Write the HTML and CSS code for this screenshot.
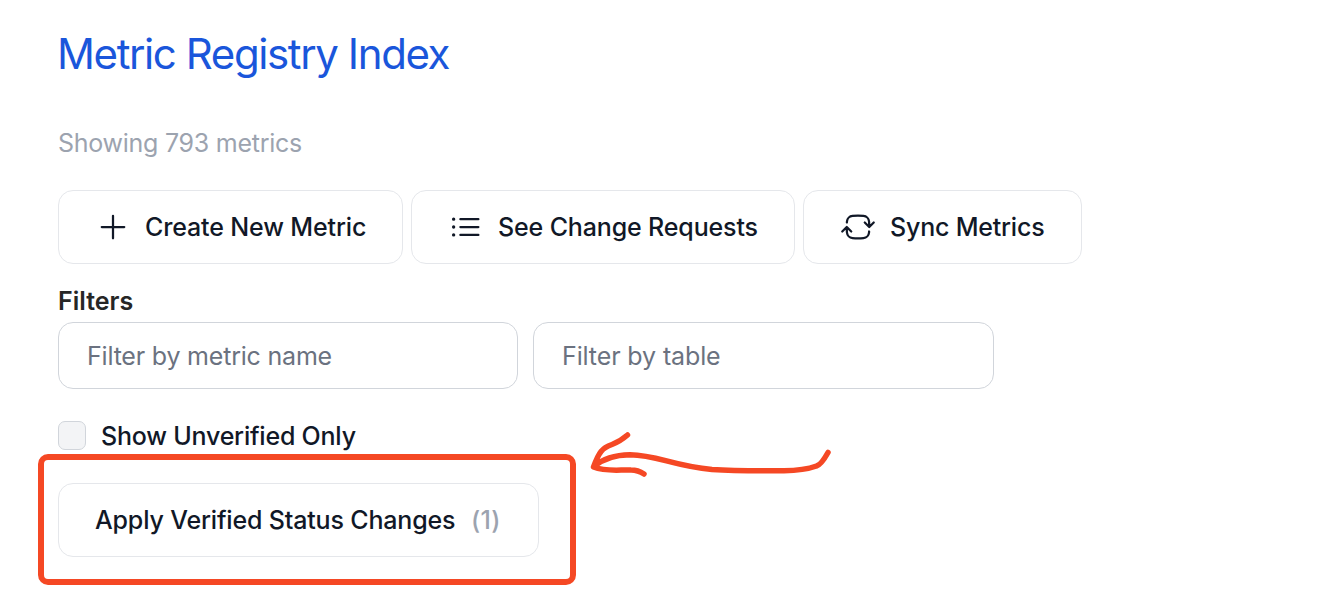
FILE: index.html
```
<!DOCTYPE html>
<html lang="en">
<head>
<meta charset="utf-8">
<title>Metric Registry Index</title>
<link rel="stylesheet" href="styles.css">
</head>
<body>
<main class="page">
  <h1 class="title">Metric Registry Index</h1>
  <p class="summary">Showing 793 metrics</p>
  <div class="actions">
    <button class="button create">
      <svg class="icon" viewBox="0 0 24 24"><path d="M12 4.5v15m7.5-7.5h-15"/></svg>
      <span>Create New Metric</span>
    </button>
    <button class="button requests">
      <svg class="icon" viewBox="0 0 24 24"><path d="M8.25 6.75h12M8.25 12h12m-12 5.25h12M3.75 6.75h.007v.008H3.75V6.75zm.375 0a.375.375 0 11-.75 0 .375.375 0 01.75 0zM3.75 12h.007v.008H3.75V12zm.375 0a.375.375 0 11-.75 0 .375.375 0 01.75 0zm-.375 5.25h.007v.008H3.75v-.008zm.375 0a.375.375 0 11-.75 0 .375.375 0 01.75 0z"/></svg>
      <span>See Change Requests</span>
    </button>
    <button class="button sync">
      <svg class="icon" viewBox="0 0 24 24"><path d="M19.5 12c0-1.232-.046-2.453-.138-3.662a4.006 4.006 0 00-3.7-3.7 48.678 48.678 0 00-7.324 0 4.006 4.006 0 00-3.7 3.7c-.017.22-.032.441-.046.662M19.5 12l3-3m-3 3l-3-3m-12 3c0 1.232.046 2.453.138 3.662a4.006 4.006 0 003.7 3.7 48.656 48.656 0 007.324 0 4.006 4.006 0 003.7-3.7c.017-.22.032-.441.046-.662M4.5 12l3 3m-3-3l-3 3"/></svg>
      <span>Sync Metrics</span>
    </button>
  </div>
  <h2 class="filters-title">Filters</h2>
  <div class="filters">
    <input class="field" type="text" placeholder="Filter by metric name">
    <input class="field field-table" type="text" placeholder="Filter by table">
  </div>
  <label class="check"><input class="checkbox" type="checkbox"><span>Show Unverified Only</span></label>
  <button class="button apply"><span>Apply Verified Status Changes</span><span class="count">(1)</span></button>
</main>
<div class="highlight"></div>
<svg class="arrow" viewBox="0 0 260 70"><path d="M248 32.500Q241 45 236.500 46Q224 50.500 204 50.700Q156 51 132 49.500C93 46 77 35 50 34.700Q27 35 14 46.500M47.500 15Q40 21.500 32 24.500C22 28 19 32 13.500 47C26 52 40 49.500 51 50Q58 50 64 54"/></svg>
</body>
</html>
```

FILE: styles.css
```
* { box-sizing: border-box; }
body {
  margin: 0;
  height: 608px;
  overflow: hidden;
  background: #fff;
  color: #111827;
  font-family: Inter, "Liberation Sans", sans-serif;
  font-size: 25px;
  line-height: 36px;
}
.page { display: flex; flex-direction: column; align-items: flex-start; padding: 29px 58px 0; }
.title { margin: 0 0 0 -1px; height: 50px; font-size: 42px; line-height: 50px; font-weight: 400; color: #1a56db; letter-spacing: -1.4px; white-space: nowrap; }
.summary { margin: 46px 0 0; height: 36px; color: #9ca3af; letter-spacing: -0.26px; }
.actions { display: flex; gap: 8px; margin-top: 29px; }
.button {
  display: flex;
  align-items: center;
  height: 74px;
  padding: 0 36px;
  border: 1px solid #e5e7eb;
  border-radius: 15px;
  background: #fff;
  color: #111827;
  font: 500 25px/36px Inter, "Liberation Sans", sans-serif;
  letter-spacing: -0.14px;
  white-space: nowrap;
}
.create { width: 345px; }
.requests { width: 384px; }
.sync { width: 279px; }
.sync span { letter-spacing: -0.2px; }
.icon { flex: none; width: 36px; height: 36px; margin-right: 14px; fill: none; stroke: currentColor; stroke-width: 1.5; stroke-linecap: round; stroke-linejoin: round; }
.filters-title { margin: 19px 0 0; font-size: 25px; line-height: 36px; font-weight: 600; color: #262626; }
.filters { display: flex; gap: 15px; margin-top: 3px; }
.field {
  width: 460px;
  height: 67px;
  padding: 0 28px;
  border: 1px solid #d1d5db;
  border-radius: 15px;
  background: #fff;
  font: 400 25px/36px Inter, "Liberation Sans", sans-serif;
  letter-spacing: -0.2px;
}
.field-table { width: 461px; letter-spacing: -0.12px; }
.field::placeholder { color: #6b7280; opacity: 1; }
.check { display: flex; align-items: center; gap: 15px; height: 36px; margin-top: 29px; font-weight: 500; letter-spacing: -0.21px; }
.checkbox { appearance: none; width: 28px; height: 29px; margin: 0 0 2px; border: 1px solid #d1d5db; border-radius: 7px; background: #f3f4f6; }
.apply { width: 481px; margin-top: 29px; letter-spacing: -0.16px; }
.count { margin-left: 15.500px; color: #9ca3af; letter-spacing: 0.3px; }
.highlight { position: absolute; left: 38px; top: 454px; width: 538px; height: 131px; border: 6px solid #f54824; border-radius: 10px; }
.arrow { position: absolute; left: 580px; top: 420px; width: 260px; height: 70px; fill: none; stroke: #f54824; stroke-width: 5.500; stroke-linecap: round; stroke-linejoin: round; }
```
